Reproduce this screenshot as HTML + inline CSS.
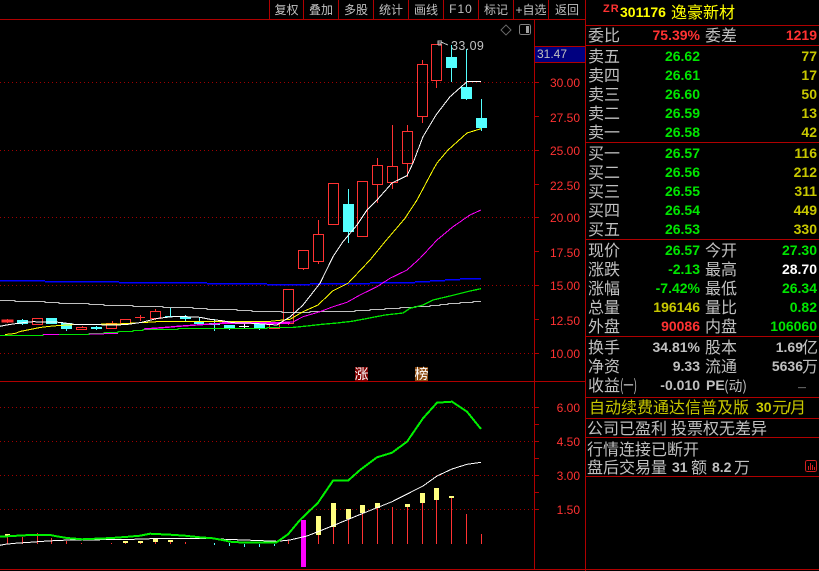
<!DOCTYPE html>
<html><head><meta charset="utf-8"><style>
html,body{margin:0;padding:0;background:#000;width:819px;height:571px;overflow:hidden}
svg{display:block}
.s{shape-rendering:crispEdges}
text{font-family:"Liberation Sans","WenQuanYi Zen Hei",sans-serif}
.c{font-family:"WenQuanYi Zen Hei","Noto Sans CJK SC",sans-serif;font-size:16px;fill:#c0c0c0}
.m{font-family:"Liberation Sans","WenQuanYi Zen Hei",sans-serif;font-size:12px;fill:#c0c0c0;text-anchor:middle}
.a{font-size:12px;fill:#ff3232;text-anchor:end}
.n{font-size:14px;font-weight:bold;text-anchor:end}
.g{fill:#00e600}.y{fill:#c8c800}.r{fill:#ff3232}.w{fill:#ffffff}.h{fill:#c0c0c0}
</style></head><body>
<svg width="819" height="571" viewBox="0 0 819 571" xmlns="http://www.w3.org/2000/svg">
<rect width="819" height="571" fill="#000"/>
<g class="s">
<g stroke="#a00000" stroke-dasharray="1 3" fill="none">
<path d="M0 82.5H534M0 150.5H534M0 217.5H534M0 285.5H534M0 353.5H534M0 407.5H534M0 441.5H534M0 475.5H534M0 509.5H534"/>
</g>
<g stroke="#b00000" fill="none">
<path d="M0 19.5H585M534.5 19V569M585.5 0V571M0 381.5H585M0 569.5H819M585 25.5H819M585 45.5H819M585 142.5H819M585 239.5H819M585 336.5H819M585 397.5H819M585 418.5H819M585 437.5H819M585 476.5H819"/>
<path d="M269.5 0V19M303.5 0V19M338.5 0V19M373.5 0V19M408.5 0V19M443.5 0V19M478.5 0V19M513.5 0V19M548.5 0V19"/>
<path d="M535 82.5H539M535 116.5H539M535 150.5H539M535 184.5H539M535 217.5H539M535 251.5H539M535 285.5H539M535 319.5H539M535 353.5H539M535 407.5H539M535 424.5H539M535 441.5H539M535 458.5H539M535 475.5H539M535 492.5H539M535 509.5H539"/>
</g>
<rect x="535" y="47" width="50" height="15" fill="#000080"/>
<path d="M535 46.5H585M535 62.5H585" stroke="#b00000"/>

<!-- candles red -->
<g stroke="#ff3232" fill="none">
<path d="M7.5 319V323M140.5 315V321M155.5 309V311M155.5 318V320M112.5 321V323M82.5 326V327M288.5 323V325M303.5 268V270M318.5 220V234M318.5 261V264M333.5 224V225M377.5 158V165M377.5 184V203M392.5 125V166M392.5 182V189M407.5 125V131M407.5 163V177M422.5 60V64M422.5 116V123M436.5 80V88"/>
<rect x="2" y="320" width="11" height="2" fill="#ff3232"/>
<rect x="32.5" y="318.5" width="10" height="6"/>
<rect x="76.5" y="327.5" width="10" height="2"/>
<rect x="106.5" y="323.5" width="10" height="5"/>
<rect x="120.5" y="319.5" width="10" height="4"/>
<path d="M135 317.5H145"/>
<rect x="150.5" y="311.5" width="10" height="7"/>
<rect x="269.5" y="322.5" width="10" height="6"/>
<rect x="283.5" y="289.5" width="10" height="34"/>
<rect x="298.5" y="250.5" width="10" height="18"/>
<rect x="313.5" y="234.5" width="10" height="27"/>
<rect x="328.5" y="183.5" width="10" height="41"/>
<rect x="357.5" y="181.5" width="10" height="55"/>
<rect x="372.5" y="165.5" width="10" height="19"/>
<rect x="387.5" y="166.5" width="10" height="16"/>
<rect x="402.5" y="131.5" width="10" height="32"/>
<rect x="417.5" y="64.5" width="10" height="52"/>
<rect x="431.5" y="44.5" width="10" height="36"/>
</g>
<!-- candles cyan -->
<g fill="#54ffff" stroke="none">
<rect x="17" y="320" width="11" height="4"/><rect x="22" y="319" width="1" height="6"/>
<rect x="46" y="318" width="11" height="6"/>
<rect x="61" y="323" width="11" height="6"/><rect x="66" y="329" width="1" height="2"/>
<rect x="91" y="327" width="11" height="2"/><rect x="96" y="326" width="1" height="4"/>
<rect x="165" y="316" width="11" height="1"/><rect x="170" y="307" width="1" height="10"/>
<rect x="180" y="317" width="11" height="2"/><rect x="185" y="315" width="1" height="6"/>
<rect x="194" y="322" width="10" height="2"/><rect x="199" y="317" width="1" height="6"/>
<rect x="209" y="323" width="11" height="2"/><rect x="214" y="319" width="1" height="12"/>
<rect x="224" y="325" width="11" height="3"/><rect x="229" y="328" width="1" height="2"/>
<rect x="254" y="323" width="11" height="5"/><rect x="259" y="328" width="1" height="2"/>
<rect x="343" y="204" width="11" height="28"/><rect x="348" y="189" width="1" height="54"/>
<rect x="446" y="57" width="11" height="11"/><rect x="451" y="45" width="1" height="37"/>
<rect x="461" y="87" width="11" height="12"/><rect x="466" y="49" width="1" height="51"/>
<rect x="476" y="118" width="11" height="10"/><rect x="481" y="99" width="1" height="32"/>
</g>
<path d="M239 326.5H249M244.5 323V328" stroke="#fff"/>

<!-- MA lines -->
<g fill="none">
<path stroke="#0000ff" stroke-width="1.5" d="M0 280.5H45M45 281.5H119M119 282.5H207M207 283.5H267M267 284.5H310M310 283.5H370M370 282.5H415M415 281.5H430M430 280.5H445M445 279.5H460M460 278.5H481"/>
<path stroke="#c0c0c0" d="M0 300.5H15V301.5H45V302.5H59V303.5H89V304.5H104V305.5H133V306.5H163V307.5H193V308.5H207V309.5H237V310.5H252V311.5H282V312.5H310V311.5H355V310.5H370V309.5H385V308.5H400V307.5H415V306.5H430V305.5H440V304.5H448V303.5H460V302.5H473V301.5H481"/>
<path stroke="#00e600" stroke-width="1.3" d="M0 335.5H43V334.5H89V333.5H104V332.5H118V331.5H133V330.5H143V329.5H178V328.5H267V327.5H292L307 326L322 324.3L337 323L352 321.3L367 318.5L385 315L403 313L410 308.3L423 305L433 300L450 296L470 291L481 288.7"/>
<path stroke="#ff00ff" stroke-width="1.4" d="M43 334.5H59M89 334H104M104 333.5H118M144 329L158 328L167 327.3L178 326.3L192 325.3L207 324.3L222 323.3"/>
<path stroke="#ff00ff" stroke-width="2" d="M222 323H290"/>
<path stroke="#ff00ff" d="M270 322.7L293 322L303 316.7L320 311.7L333 306.7L347 302.3L360 295L377 286.7L390 278.3L407 270L420 258.3L437 240L453 226.7L470 215L481 210"/>
<path stroke="#ffff00" d="M5 334.5L15 333.5L20 331.5L30 329.5L40 327.5L48 326.5L59 325.5L73 324.7L117 324L147 322.3L163 321.3L267 321.7L278 320.5L290 319.3L303 311.7L318 305L333 290.7L348 283.3L370 260L385 241.7L405 218.3L417 200L433 170L437 163L448 150L467 133L481 128.7"/>
<path stroke="#ffffff" d="M0 326.3L5 325.3L11 324.3L26 322.3L33 321.7L60 322.3L74 324.3L117 325L128 324.3L142 322.3L150 320.3L158 318.3L167 317.3L177 316.3L200 317.3L210 319.3L222 320.7L233 322.7L253 323.3L277 325L282 321.7L290 317L303 305L320 283.3L333 256.7L343 241.7L357 225L367 210L377 200L392 183L407 175.7L413 163L423 136.7L436 115L450 96.7L467 81.7L481 81.3"/>
</g>

<!-- arrow -->
<path d="M438 45V41H442M438 43H441V45H438M441 42L448 45" stroke="#c0c0c0" fill="none"/>
<!-- icons -->
<path d="M506 25L511 30L506 35L501 30Z" stroke="#606060" fill="none"/>
<rect x="519.5" y="24.5" width="11" height="10" rx="2" fill="none" stroke="#808080"/>
<rect x="526" y="26" width="3" height="7" fill="#a0a0a0"/>

<!-- markers -->
<rect x="355" y="367" width="13" height="14" fill="#800000"/>
<rect x="415" y="367" width="13" height="14" fill="#8b4a10"/>

<!-- lower sticks -->
<g stroke="#ff3232" fill="none">
<path d="M7.5 537V544M22.5 537V544M37.5 533V544M51.5 538V544M66.5 541V544M81.5 543V544M111.5 543V544M125.5 543V544M140.5 541V544M155.5 542V544M170.5 542V544M185.5 542V544M288.5 540V544M318.5 535V544M333.5 527V544M348.5 519V544M362.5 513V544M377.5 508V544M392.5 507V544M407.5 507V544M422.5 503V544M436.5 500V544M451.5 498V544M466.5 514V544M481.5 534V544"/>
</g>
<g stroke="#54ffff" fill="none"><path d="M214.5 543V545M229.5 543V546M244.5 544V547M259.5 544V547M274.5 544V546"/></g>
<g fill="#ffff80">
<rect x="5" y="534" width="5" height="3"/><rect x="123" y="541" width="5" height="2"/><rect x="138" y="541" width="5" height="2"/><rect x="153" y="539" width="5" height="3"/><rect x="168" y="540" width="5" height="2"/>
<rect x="316" y="516" width="5" height="19"/><rect x="331" y="503" width="5" height="24"/><rect x="346" y="509" width="5" height="10"/><rect x="360" y="505" width="5" height="8"/><rect x="375" y="503" width="5" height="5"/><rect x="405" y="504" width="5" height="3"/><rect x="420" y="493" width="5" height="10"/><rect x="434" y="488" width="5" height="12"/><rect x="449" y="496" width="5" height="2"/>
</g>
<rect x="301" y="520" width="5" height="47" fill="#ff00ff"/>
<g fill="none">
<path stroke="#ffffff" d="M0 545.3L5 544.3L15 543.3L30 542.3L43 541.3L60 540.3L133 539.3L163 538.3L207 538.3L225 539.3L252 540.3L277 541.3L290 540L307 536L333 525.7L363 513.3L392 501.7L423 486L437 476L452 469L467 464.3L481 462.3"/>
<path stroke="#00f000" stroke-width="2" d="M0 536.7L30 535L50 535L59 536.7L67 538L82 539.3L112 538L125 537L140 535.7L150 533.7L170 534.7L185 535.7L200 537.3L213 538.3L224 540.3L230 541.7L245 542.7L276 542.7L288 534.3L300 520L307 513.3L318 502.7L333 480.7L348 480.7L360 470L377 457.3L392 452.7L407 441.7L423 418.3L437 402.7L452 401.7L467 411.7L481 429"/>
</g>
<!-- mini chart icon -->
<rect x="805.5" y="460.5" width="11" height="11" rx="2" fill="none" stroke="#d02020"/>
<path d="M808.5 466V470M810.5 463V470M812.5 465V470M814.5 467V470" stroke="#d02020"/>
</g>

<!-- menu -->
<text class="m" x="286.5" y="14">复权</text>
<text class="m" x="321" y="14">叠加</text>
<text class="m" x="356" y="14">多股</text>
<text class="m" x="391" y="14">统计</text>
<text class="m" x="426" y="14">画线</text>
<text class="m" x="461" y="13" letter-spacing="1">F10</text>
<text class="m" x="496" y="14">标记</text>
<text class="m" x="531" y="14">+自选</text>
<text class="m" x="567" y="14">返回</text>

<text x="451" y="50" font-size="12.5" fill="#c0c0c0" letter-spacing=".4">33.09</text>
<text x="537" y="58" font-size="12" fill="#c0c0c0">31.47</text>

<!-- axis -->
<text class="a" x="580" y="87">30.00</text>
<text class="a" x="580" y="122">27.50</text>
<text class="a" x="580" y="155">25.00</text>
<text class="a" x="580" y="190">22.50</text>
<text class="a" x="580" y="222">20.00</text>
<text class="a" x="580" y="257">17.50</text>
<text class="a" x="580" y="290">15.00</text>
<text class="a" x="580" y="325">12.50</text>
<text class="a" x="580" y="358">10.00</text>
<text class="a" x="580" y="412">6.00</text>
<text class="a" x="580" y="446">4.50</text>
<text class="a" x="580" y="480">3.00</text>
<text class="a" x="580" y="514">1.50</text>

<text x="354.5" y="379" font-size="14" class="w" style="font-family:'WenQuanYi Zen Hei',sans-serif">涨</text>
<text x="414.5" y="379" font-size="14" class="w" style="font-family:'WenQuanYi Zen Hei',sans-serif">榜</text>

<!-- header -->
<text x="603" y="12" font-size="11" font-weight="bold" fill="#ff3232" letter-spacing="1">ZR</text>
<text x="620" y="17" font-size="14" font-weight="bold" fill="#ffff00">301176</text>
<text x="671" y="18" class="c" style="fill:#ffff00">逸豪新材</text>

<!-- labels -->
<text class="c" x="588" y="41">委比</text><text class="c" x="705" y="41">委差</text>
<text class="c" x="588" y="62">卖五</text><text class="c" x="588" y="81">卖四</text><text class="c" x="588" y="100">卖三</text><text class="c" x="588" y="119">卖二</text><text class="c" x="588" y="138">卖一</text>
<text class="c" x="588" y="159">买一</text><text class="c" x="588" y="178">买二</text><text class="c" x="588" y="197">买三</text><text class="c" x="588" y="216">买四</text><text class="c" x="588" y="235">买五</text>
<text class="c" x="588" y="256">现价</text><text class="c" x="705" y="256">今开</text>
<text class="c" x="588" y="275">涨跌</text><text class="c" x="705" y="275">最高</text>
<text class="c" x="588" y="294">涨幅</text><text class="c" x="705" y="294">最低</text>
<text class="c" x="588" y="313">总量</text><text class="c" x="705" y="313">量比</text>
<text class="c" x="588" y="332">外盘</text><text class="c" x="705" y="332">内盘</text>
<text class="c" x="588" y="353">换手</text><text class="c" x="705" y="353">股本</text>
<text class="c" x="588" y="372">净资</text><text class="c" x="705" y="372">流通</text>
<text class="c" x="588" y="391">收益</text><text class="c" x="620" y="391" textLength="17" lengthAdjust="spacingAndGlyphs">(一)</text>

<!-- values -->
<text class="n r" x="700" y="40">75.39%</text><text class="n r" x="817" y="40">1219</text>
<text class="n g" x="700" y="61">26.62</text><text class="n y" x="817" y="61">77</text>
<text class="n g" x="700" y="80">26.61</text><text class="n y" x="817" y="80">17</text>
<text class="n g" x="700" y="99">26.60</text><text class="n y" x="817" y="99">50</text>
<text class="n g" x="700" y="118">26.59</text><text class="n y" x="817" y="118">13</text>
<text class="n g" x="700" y="137">26.58</text><text class="n y" x="817" y="137">42</text>
<text class="n g" x="700" y="158">26.57</text><text class="n y" x="817" y="158">116</text>
<text class="n g" x="700" y="177">26.56</text><text class="n y" x="817" y="177">212</text>
<text class="n g" x="700" y="196">26.55</text><text class="n y" x="817" y="196">311</text>
<text class="n g" x="700" y="215">26.54</text><text class="n y" x="817" y="215">449</text>
<text class="n g" x="700" y="234">26.53</text><text class="n y" x="817" y="234">330</text>
<text class="n g" x="700" y="255">26.57</text><text class="n g" x="817" y="255">27.30</text>
<text class="n g" x="700" y="274">-2.13</text><text class="n w" x="817" y="274">28.70</text>
<text class="n g" x="700" y="293">-7.42%</text><text class="n g" x="817" y="293">26.34</text>
<text class="n y" x="700" y="312">196146</text><text class="n g" x="817" y="312">0.82</text>
<text class="n r" x="700" y="331">90086</text><text class="n g" x="817" y="331">106060</text>
<text class="n h" x="700" y="352">34.81%</text><text class="n h" x="803" y="352">1.69</text><text class="c" x="802" y="353">亿</text>
<text class="n h" x="700" y="371">9.33</text><text class="n h" x="803" y="371">5636</text><text class="c" x="802" y="372">万</text>
<text class="n h" x="700" y="390">-0.010</text>
<text x="706" y="390" font-size="14" font-weight="bold" class="h">PE</text><text class="c" x="724" y="391" style="font-size:14px" textLength="23" lengthAdjust="spacingAndGlyphs">(动)</text>
<text x="798" y="390" font-size="8" class="h">—</text>

<!-- notices -->
<text class="c" x="589" y="413" style="fill:#c8c800">自动续费通达信普及版</text>
<text x="756" y="412" font-size="14" font-weight="bold" fill="#c8c800">30</text>
<text class="c" x="772" y="413" style="fill:#c8c800">元</text>
<text x="787" y="412" font-size="14" font-weight="bold" fill="#c8c800">/</text>
<text class="c" x="790" y="413" style="fill:#c8c800">月</text>
<text class="c" x="587" y="434">公司已盈利</text>
<text class="c" x="671" y="434">投票权无差异</text>
<text class="c" x="587" y="455">行情连接已断开</text>
<text class="c" x="587" y="473">盘后交易量</text>
<text x="672" y="472" font-size="14" font-weight="bold" class="h">31</text>
<text class="c" x="691" y="473">额</text>
<text x="712" y="472" font-size="14" font-weight="bold" class="h">8.2</text>
<text class="c" x="734" y="473">万</text>
</svg>
</body></html>
